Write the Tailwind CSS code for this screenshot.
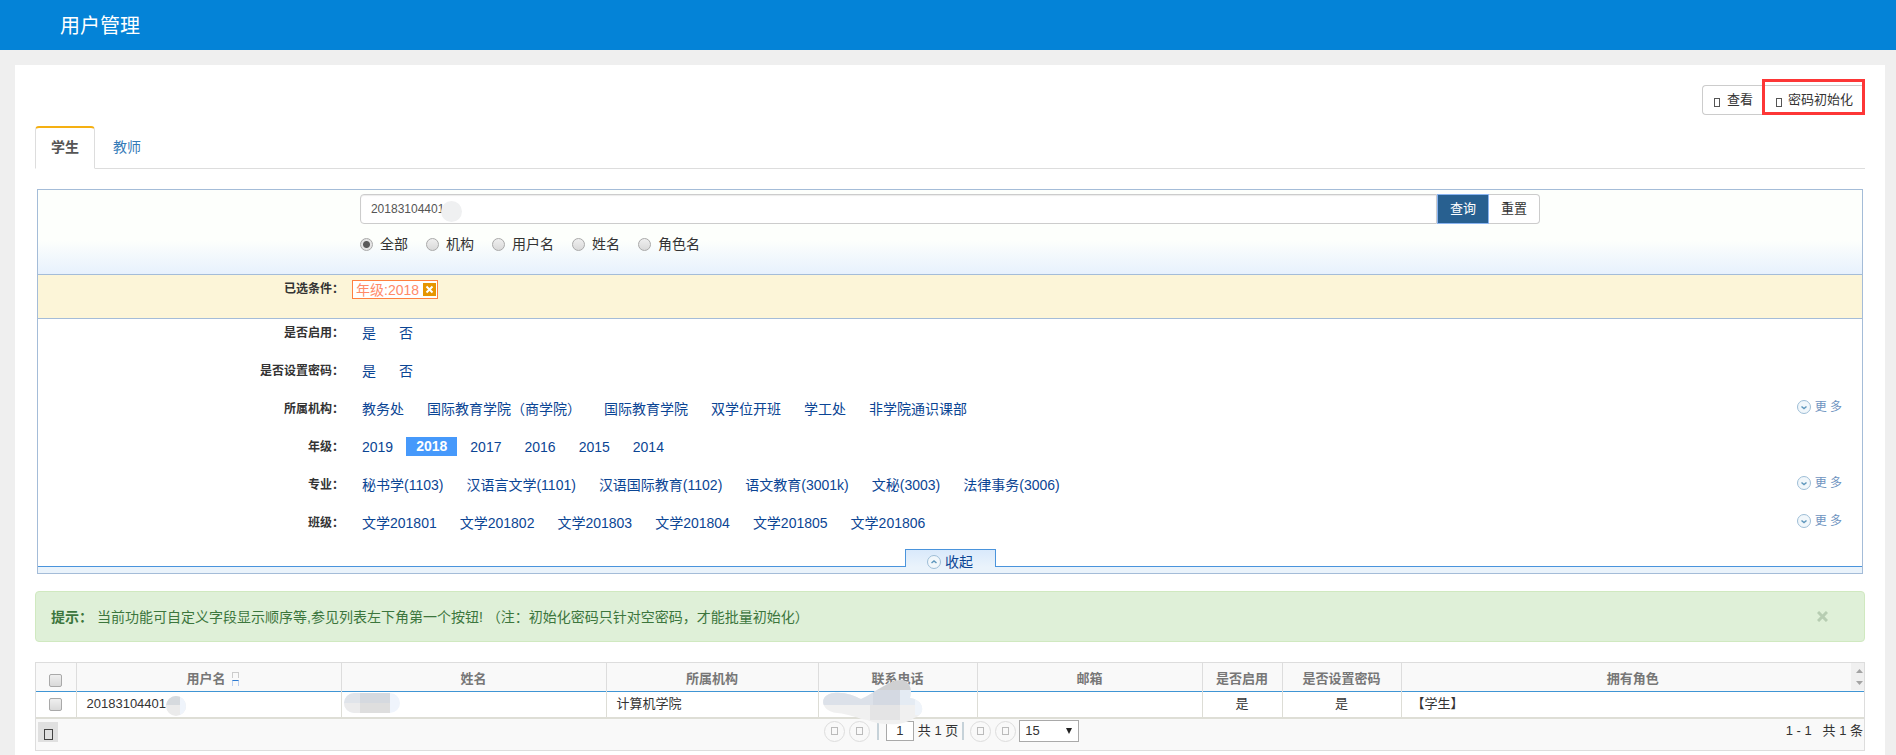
<!DOCTYPE html>
<html lang="zh-CN">
<head>
  <meta charset="UTF-8" />
  <meta name="viewport" content="width=device-width, initial-scale=1.0"/>
  <title>用户管理</title>
  <script src="https://cdn.jsdelivr.net/npm/@tailwindcss/browser@4"></script>
  <style>
    body {
      font-family: 'Liberation Sans', 'Noto Sans CJK SC', sans-serif;
    }

    .tick {
      appearance: none;
      width: 13px;
      height: 13px;
      flex: none;
      border: 1px solid #a9a9a9;
      background: linear-gradient(#efefef, #d9d9d9);
    }

    .tick[type="radio"] {
      border-radius: 50%;
    }

    .tick[type="checkbox"] {
      border-radius: 2px;
    }

    .tick[type="radio"]:checked {
      background: radial-gradient(circle, #5a5a5a 0 3px, #e4e4e4 4px);
    }

    .row {
      display: flex;
      height: 38px;
      line-height: 28px;
    }

    .row > .name {
      width: 306px;
      margin-right: 8px;
      flex: none;
      text-align: right;
      font-size: 12px;
      font-weight: bold;
      color: #333;
    }

    .row a {
      padding: 0 10px;
      color: #0b4594;
    }
  </style>
</head>
<body class="flex min-h-screen flex-col bg-[#efefef] text-sm text-[#333]">

  <!-- Header -->
  <header class="h-[50px] bg-[#0483d7] px-[60px]">
    <h1 class="text-xl leading-[52px] text-white">用户管理</h1>
  </header>

  <main class="mx-[15px] mt-[15px] mr-[11px] flex-1 bg-white px-5 pt-5">

    <!-- Toolbar -->
    <div class="relative flex justify-end text-[13px]">
      <button class="flex h-[30px] items-center rounded-l border border-r-0 border-[#ccc] bg-white pr-[9px] pl-[11px]"><i class="mt-1 mr-[7px] h-[9px] w-[6px] border border-[#555]"></i>查看</button>
      <button class="flex h-[30px] items-center rounded-r border border-[#ccc] border-l-white bg-white pr-[11px] pl-[13px]"><i class="mt-1 mr-[6px] h-[9px] w-[6px] border border-[#555]"></i>密码初始化</button>
      <div class="pointer-events-none absolute -top-[6px] right-0 h-9 w-[103px] border-3 border-[#fd3636]"></div>
    </div>

    <!-- Tabs -->
    <nav class="mt-[11px] flex border-b border-[#ddd] leading-[39px]">
      <a href="#" class="-mb-px rounded-t border border-t-2 border-[#ddd] border-t-[#f5b012] border-b-white bg-white px-[15px] pb-px font-bold text-[#555]">学生</a>
      <a href="#" class="px-[18px] pt-[2px] text-[#337ab7]">教师</a>
    </nav>

    <!-- Search panel -->
    <section class="mx-[2px] mt-5 border border-[#a4bcd8]">
      <form class="h-[85px] border-b border-[#a4bcd8] bg-linear-to-b from-[#fdfffc] from-60% to-[#e7f1fd] pt-1">
        <div class="mx-auto w-[64.7%]">
          <div class="relative flex text-[13px]">
            <input type="text" aria-label="关键字" value="20183104401" class="h-[30px] min-w-0 flex-1 rounded-l border border-[#ccc] bg-white px-[10px] text-xs text-[#555] shadow-[inset_0_1px_1px_rgba(0,0,0,0.08)]" />
            <button type="button" class="w-[52px] border border-[#8ab4f0] bg-[#286090] text-white">查询</button>
            <button type="button" class="w-[51px] rounded-r border border-l-0 border-[#ccc] bg-white">重置</button>
            <div class="absolute top-[7px] left-[81px] size-[21px] rounded-full bg-[#eff0f1]"></div>
          </div>
          <div class="mt-[10px] flex h-5 items-center gap-[18px]">
            <label class="flex items-center gap-[7px]"><input type="radio" name="scope" checked class="tick" />全部</label>
            <label class="flex items-center gap-[7px]"><input type="radio" name="scope" class="tick" />机构</label>
            <label class="flex items-center gap-[7px]"><input type="radio" name="scope" class="tick" />用户名</label>
            <label class="flex items-center gap-[7px]"><input type="radio" name="scope" class="tick" />姓名</label>
            <label class="flex items-center gap-[7px]"><input type="radio" name="scope" class="tick" />角色名</label>
          </div>
        </div>
      </form>

      <!-- Selected conditions -->
      <div class="border-b border-[#a4bcd8] bg-[#fcf5d8] pb-[5px]">
        <div class="row">
          <span class="name">已选条件：</span>
          <span class="mt-[5px] flex h-[19px] items-center gap-1 border border-[#ff8040] bg-white pr-px pl-[3px] text-[#ff8a68]">年级:2018
            <button type="button" aria-label="移除" class="flex size-[13px] items-center justify-center bg-[#e69500]">
              <svg width="9" height="9" viewBox="0 0 9 9" fill="none" stroke="#fff" stroke-width="2"><path d="M1.5 1.5l6 6M7.500 1.500l-6 6"/></svg>
            </button>
          </span>
        </div>
      </div>

      <!-- Filters -->
      <div class="row"><span class="name">是否启用：</span>
        <div class="flex gap-[3px]"><a href="#">是</a><a href="#">否</a></div>
      </div>
      <div class="row"><span class="name">是否设置密码：</span>
        <div class="flex gap-[3px]"><a href="#">是</a><a href="#">否</a></div>
      </div>
      <div class="row"><span class="name">所属机构：</span>
        <div class="flex flex-1 gap-[3px]"><a href="#">教务处</a><a href="#">国际教育学院（商学院）</a><a href="#">国际教育学院</a><a href="#">双学位开班</a><a href="#">学工处</a><a href="#">非学院通识课部</a></div>
        <button type="button" class="mr-5 flex h-6 items-center gap-1 text-xs text-[#6e93c0]">
          <svg width="14" height="14" viewBox="0 0 14 14" fill="#f1f7fb" stroke="#9dbdd6"><circle cx="7" cy="7" r="6.500"/><path d="M4.500 6.500L7 8.500l2.500-2" fill="none" stroke="#5f97bd" stroke-width="1.500"/></svg>更 多</button>
      </div>
      <div class="row"><span class="name">年级：</span>
        <div class="flex gap-[3px]"><a href="#">2019</a><span class="mt-[4px] h-[19px] bg-[#4699fb] px-[10px] leading-[19px] font-bold text-white">2018</span><a href="#">2017</a><a href="#">2016</a><a href="#">2015</a><a href="#">2014</a></div>
      </div>
      <div class="row"><span class="name">专业：</span>
        <div class="flex flex-1 gap-[3px]"><a href="#">秘书学(1103)</a><a href="#">汉语言文学(1101)</a><a href="#">汉语国际教育(1102)</a><a href="#">语文教育(3001k)</a><a href="#">文秘(3003)</a><a href="#">法律事务(3006)</a></div>
        <button type="button" class="mr-5 flex h-6 items-center gap-1 text-xs text-[#6e93c0]">
          <svg width="14" height="14" viewBox="0 0 14 14" fill="#f1f7fb" stroke="#9dbdd6"><circle cx="7" cy="7" r="6.500"/><path d="M4.500 6.500L7 8.500l2.500-2" fill="none" stroke="#5f97bd" stroke-width="1.500"/></svg>更 多</button>
      </div>
      <div class="row"><span class="name">班级：</span>
        <div class="flex flex-1 gap-[3px]"><a href="#">文学201801</a><a href="#">文学201802</a><a href="#">文学201803</a><a href="#">文学201804</a><a href="#">文学201805</a><a href="#">文学201806</a></div>
        <button type="button" class="mr-5 flex h-6 items-center gap-1 text-xs text-[#6e93c0]">
          <svg width="14" height="14" viewBox="0 0 14 14" fill="#f1f7fb" stroke="#9dbdd6"><circle cx="7" cy="7" r="6.500"/><path d="M4.500 6.500L7 8.500l2.500-2" fill="none" stroke="#5f97bd" stroke-width="1.500"/></svg>更 多</button>
      </div>

      <!-- Collapse handle -->
      <div class="mt-[2px] flex justify-center">
        <button type="button" class="z-10 -mb-px flex h-[18px] w-[91px] items-center justify-center gap-1 border border-b-0 border-[#4a94dc] bg-linear-to-b from-[#d9e9fb] to-[#eaf3fb] pt-[6px] text-[#0b4594]">
          <svg width="14" height="14" viewBox="0 0 14 14" fill="#f1f7fb" stroke="#9dbdd6"><circle cx="7" cy="7" r="6.500"/><path d="M4.500 8L7 6l2.500 2" fill="none" stroke="#5f97bd" stroke-width="1.500"/></svg>收起</button>
      </div>
      <div class="h-[7px] border-t border-[#4a94dc] bg-[#eaf3fb]"></div>
    </section>

    <!-- Tip -->
    <div class="mt-[17px] flex h-[51px] items-center rounded border border-[#d0e9c0] bg-[#dff0d8] pr-9 pl-[15px] text-[#3c763d]">
      <strong class="mr-1">提示：</strong>
      <p class="flex-1">当前功能可自定义字段显示顺序等,参见列表左下角第一个按钮! （注：初始化密码只针对空密码，才能批量初始化）</p>
      <button type="button" aria-label="关闭">
        <svg width="11" height="11" viewBox="0 0 11 11" stroke="#b7cdb2" stroke-width="3"><path d="M1 1l9 9M10 1l-9 9"/></svg>
      </button>
    </div>

    <!-- User table -->
    <div class="relative mt-5 border border-[#ddd] text-[13px]">
      <table class="w-full table-fixed leading-5">
        <colgroup>
          <col class="w-[40px]" /><col class="w-[265px]" /><col class="w-[265px]" /><col class="w-[212px]" /><col class="w-[159px]" /><col class="w-[225px]" /><col class="w-[80px]" /><col class="w-[119px]" /><col />
        </colgroup>
        <thead>
          <tr class="h-7 border-b border-[#3f95d4] bg-[#f9f9f9] text-[#777]">
            <th class="border-r border-[#ddd] pt-2"><input type="checkbox" aria-label="全选" class="tick block mx-auto" /></th>
            <th class="border-r border-[#ddd] pt-1 pl-2">
              <span class="flex items-center justify-center gap-[6px]">用户名
                <span class="flex flex-col gap-[2px]"><i class="h-[6px] w-[7px] border border-b-0 border-[#ccc]"></i><i class="h-[6px] w-[7px] border border-b-0 border-[#bcd0f0] border-t-[#2c7ad0]"></i></span>
              </span>
            </th>
            <th class="border-r border-[#ddd] pt-1">姓名</th>
            <th class="border-r border-[#ddd] pt-1">所属机构</th>
            <th class="border-r border-[#ddd] pt-1">联系电话</th>
            <th class="border-r border-[#ddd] pt-1">邮箱</th>
            <th class="border-r border-[#ddd] pt-1">是否启用</th>
            <th class="border-r border-[#ddd] pt-1">是否设置密码</th>
            <th class="pt-1">拥有角色</th>
          </tr>
        </thead>
        <tbody>
          <tr class="h-[27px] border-b-2 border-[#deded6] bg-white">
            <td class="border-r border-[#ddddd6]"><input type="checkbox" aria-label="选择" class="tick block mx-auto" /></td>
            <td class="border-r border-[#ddddd6] px-[10px]">20183104401</td>
            <td class="border-r border-[#ddddd6]"></td>
            <td class="border-r border-[#ddddd6] px-[10px]">计算机学院</td>
            <td class="border-r border-[#ddddd6]"></td>
            <td class="border-r border-[#ddddd6]"></td>
            <td class="border-r border-[#ddddd6] text-center">是</td>
            <td class="border-r border-[#ddddd6] text-center">是</td>
            <td class="px-[10px]">【学生】</td>
          </tr>
        </tbody>
      </table>

      <!-- Header scroll arrows -->
      <div class="absolute top-0 right-0 flex h-[27px] w-[13px] items-center bg-[#f0f0f0]">
        <svg width="13" height="18" viewBox="0 0 13 18" fill="#a3a3a3"><path d="M5 5l3.500-4L12 5zM5 13h7l-3.500 4z"/></svg>
      </div>

      <!-- Pager -->
      <div class="grid h-[31px] grid-cols-[1fr_auto_1fr] items-start bg-[#f9f9f9] pt-[2px] leading-5">
        <button type="button" aria-label="列设置" class="mt-px ml-[2px] flex size-5 items-center justify-center bg-[#e0e0e0]"><i class="mt-1 h-[11px] w-[9px] border border-[#444]"></i></button>
        <div class="flex h-5 items-center gap-1 pl-[3px]">
          <button type="button" aria-label="首页" class="flex size-[21px] items-center justify-center rounded-full border border-[#ddd]"><i class="h-2 w-[7px] border border-[#bbb]"></i></button>
          <button type="button" aria-label="上一页" class="flex size-[21px] items-center justify-center rounded-full border border-[#ddd]"><i class="h-2 w-[7px] border border-[#bbb]"></i></button>
          <i class="mx-[3px] h-[18px] w-[2px] bg-[#c6d2d9]"></i>
          <input type="text" aria-label="页码" value="1" class="h-5 w-7 border border-[#a9a9a9] bg-white text-center" />
          <span>共 1 页</span>
          <i class="mr-[2px] h-[18px] w-[2px] bg-[#c6d2d9]"></i>
          <button type="button" aria-label="下一页" class="flex size-[21px] items-center justify-center rounded-full border border-[#ddd]"><i class="h-2 w-[7px] border border-[#bbb]"></i></button>
          <button type="button" aria-label="末页" class="flex size-[21px] items-center justify-center rounded-full border border-[#ddd]"><i class="h-2 w-[7px] border border-[#bbb]"></i></button>
          <div class="relative -ml-px">
            <select aria-label="每页条数" class="block h-[22px] w-[60px] appearance-none border border-[#a9a9a9] bg-white pl-[5px]"><option>15</option><option>30</option></select>
            <svg class="pointer-events-none absolute top-[8px] right-[7px]" width="6" height="6" viewBox="0 0 6 6" fill="#222"><path d="M0 0h6L3 6z"/></svg>
          </div>
        </div>
        <span class="pr-px text-right whitespace-pre">1 - 1   共 1 条</span>
      </div>

      <!-- Masked values -->
      <svg class="pointer-events-none absolute top-[33px] left-[130px]" width="20" height="20" viewBox="0 0 20 20">
        <clipPath id="m1"><circle cx="10" cy="10" r="10"/></clipPath>
        <g clip-path="url(#m1)"><path fill="#ebebeb" d="M0 0h20v20H0z"/><path fill="#d6dade" d="M0 0h14v9H0z"/><path fill="#eff4fb" d="M14 0h6v20h-6z"/></g>
      </svg>
      <svg class="pointer-events-none absolute top-[30px] left-[308px]" width="56" height="20" viewBox="0 0 56 20">
        <clipPath id="m2"><rect width="56" height="20" rx="10"/></clipPath>
        <g clip-path="url(#m2)"><path fill="#eff4fc" d="M0 0h56v20H0z"/><path fill="#e0e4ea" d="M0 0h16v10H0z"/><path fill="#d5d9df" d="M16 0h30v10H16z"/><path fill="#ebebec" d="M0 10h16v10H0z"/><path fill="#dedede" d="M16 10h30v10H16z"/></g>
      </svg>
      <svg class="pointer-events-none absolute top-[17px] left-[787px]" width="100" height="45" viewBox="0 0 100 45">
        <clipPath id="m3"><path d="M11 13c12-1 20 3 27 6C52 13 66 0 78 0c10 1 11 10 9 18 15 2 16 17 4 20-9 8-33 8-47 2-8-1-17-6-30-7C-4 31-4 14 11 13z"/></clipPath>
        <g clip-path="url(#m3)"><path fill="#f0f0f0" d="M0 0h100v45H0z"/><path fill="#dce1e9" d="M0 10h52v15H0z"/><path fill="#cfd0d2" d="M50 0h40v10H50z"/><path fill="#d4d9e2" d="M50 10h27v15H50z"/><path fill="#e4ebf3" d="M77 10h15v15H77z"/><path fill="#e4e4e5" d="M47 25h30v15H47z"/><path fill="#eff4fa" d="M92 10h8v25h-8z"/></g>
      </svg>
    </div>
  </main>

</body>
</html>
